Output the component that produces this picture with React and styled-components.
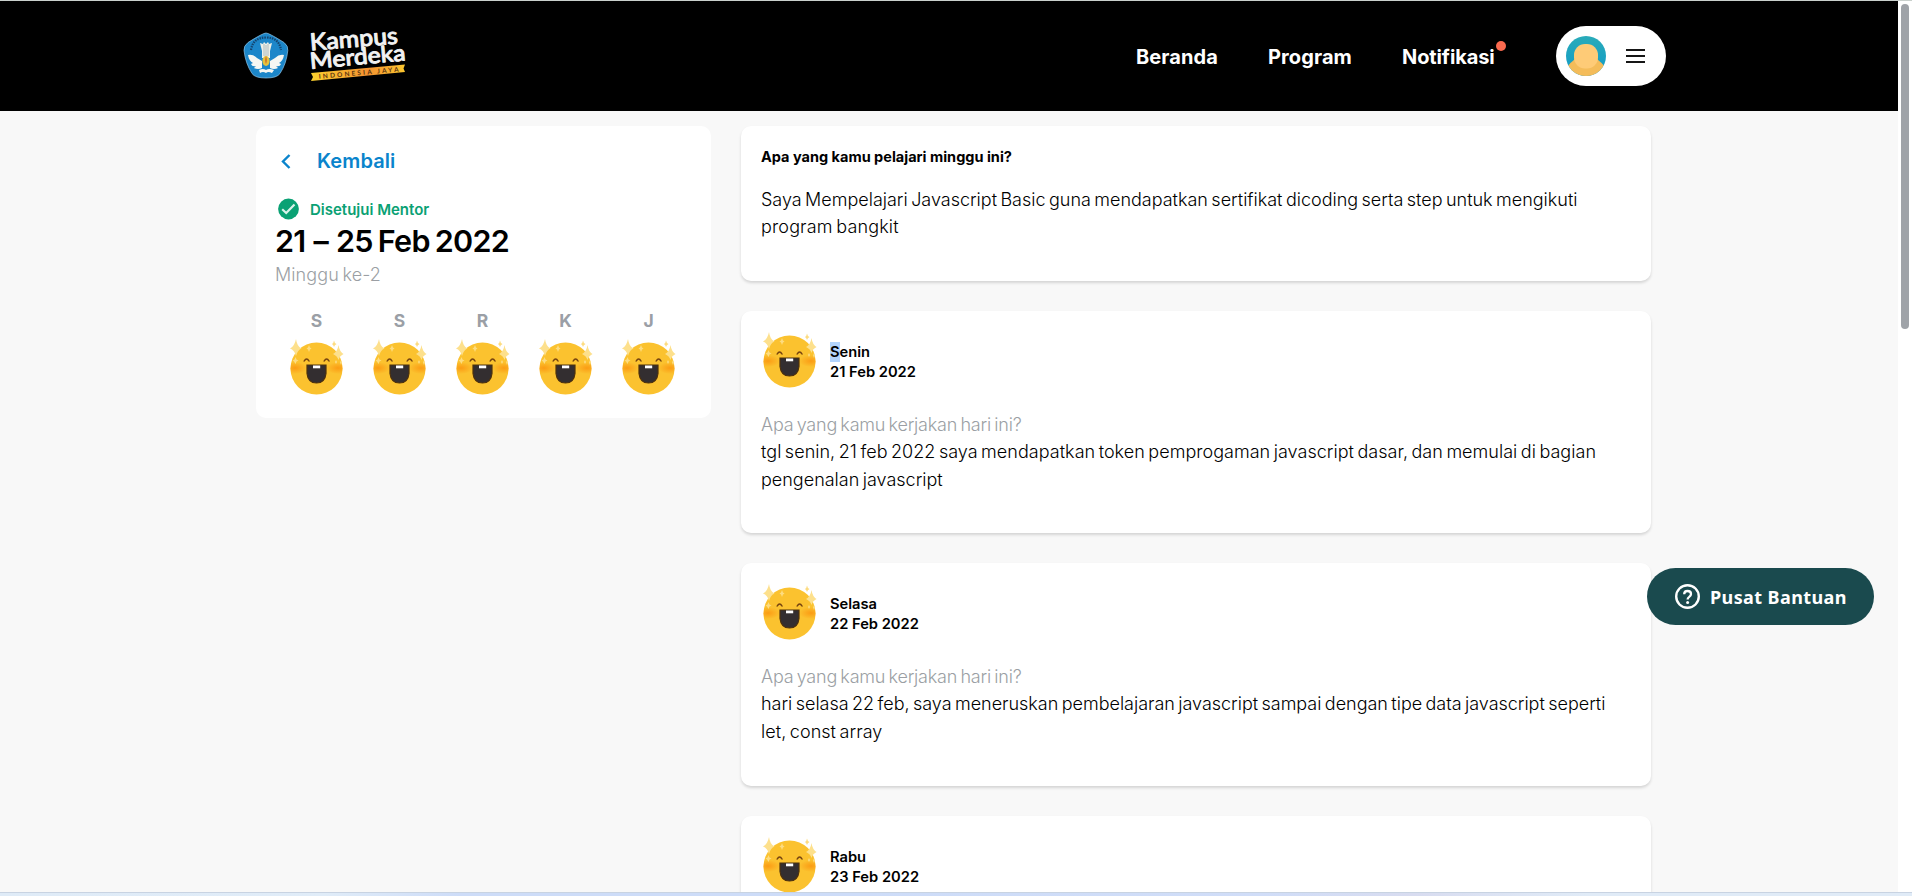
import React from "react";
import styled, { createGlobalStyle } from "styled-components";

const Global = createGlobalStyle`
  * { box-sizing: border-box; }
  html, body { margin: 0; padding: 0; overflow: hidden; }
  body {
    font-family: Inter, "Liberation Sans", sans-serif;
    color: #000;
    background: #f8f8f8;
  }
  p, h1, h2, h3 { margin: 0; font-weight: inherit; }
`;

const Window = styled.div`
  display: flex;
  flex-direction: column;
  width: 1912px;
  height: 896px;
  overflow: hidden;
  border-top: 1px solid #c9d0cc;
`;

const Viewport = styled.div`
  display: flex;
  height: 891px;
`;

const Page = styled.div`
  flex: 1;
  height: 891px;
  overflow: hidden;
  background: #f8f8f8;
`;

const ScrollTrack = styled.div`
  width: 14px;
  padding: 3px 3px 0 3px;
  background: #fff;
`;

const ScrollThumb = styled.div`
  width: 8px;
  height: 325px;
  border-radius: 4px;
  background: #9fa3a8;
`;

const Taskbar = styled.div`
  height: 4px;
  border-top: 1px solid #c8d3e2;
  background: linear-gradient(90deg, #dfebf7 0%, #e0ecf8 17%, #cddcf8 24%, #cddcf8 45%, #d0ddf8 66%, #d8dcf0 74%, #e0ebf7 83%);
`;

const Header = styled.header`
  display: flex;
  align-items: center;
  height: 110px;
  padding: 0 232px 0 243px;
  background: #000;
`;

const Brand = styled.div`
  display: flex;
  align-items: center;
  gap: 22px;
  flex: 1;
`;

const Nav = styled.nav`
  display: flex;
  align-items: center;
  gap: 50px;
  margin-right: 62px;
  padding-top: 2px;
`;

const NavLink = styled.a`
  position: relative;
  width: ${(p) => p.$width}px;
  white-space: nowrap;
  color: #fff;
  font-size: 20px;
  line-height: 26px;
  font-weight: 700;
  letter-spacing: ${(p) => p.$track || 0}px;
`;

const NewDot = styled.span`
  position: absolute;
  top: -3px;
  right: -12px;
  width: 10px;
  height: 10px;
  border-radius: 50%;
  background: #fa6a4f;
`;

const AccountPill = styled.button`
  display: flex;
  align-items: center;
  gap: 20px;
  width: 110px;
  height: 60px;
  padding: 0 10px;
  border: 0;
  border-radius: 30px;
  background: #fff;
`;

const Columns = styled.main`
  display: flex;
  align-items: flex-start;
  gap: 30px;
  padding: 15px 247px 0 256px;
`;

const Card = styled.section`
  background: #fff;
  border-radius: 10px;
`;

const SummaryCard = styled(Card)`
  width: 455px;
  height: 292px;
  padding: 19px 20px 20px 19px;
`;

const BackLink = styled.a`
  display: flex;
  align-items: center;
  height: 32px;
  gap: 26px;
  padding-left: 6px;
  color: #0a84cc;
  font-size: 20px;
  line-height: 34px;
  font-weight: 600;
  letter-spacing: 0.1px;
`;

const Status = styled.div`
  display: flex;
  align-items: center;
  height: 23px;
  margin-top: 20px;
  gap: 11px;
  padding-left: 3px;
  color: #0aa174;
  font-size: 15px;
  font-weight: 600;
`;

const StatusLabel = styled.span`
  padding-top: 2px;
`;

const WeekTitle = styled.h1`
  height: 41px;
  line-height: 42px;
  font-size: 30.5px;
  font-weight: 600;
  white-space: nowrap;
  letter-spacing: -0.7px;
  word-spacing: -2px;
`;

const Dash = styled.span`
  padding: 0 3px;
`;

const Muted = styled.p`
  color: #9b9fa4;
  font-size: 18px;
  line-height: 27.5px;
  font-weight: 300;
  letter-spacing: ${(p) => p.$track || 0}px;
  word-spacing: -1.6px;
  white-space: nowrap;
`;

const Days = styled.div`
  display: flex;
  margin-top: 20px;
`;

const Day = styled.div`
  display: flex;
  flex-direction: column;
  align-items: center;
  gap: 6px;
  width: 83px;
  color: #9b9fa6;
  font-size: 17.5px;
  line-height: 24px;
  font-weight: 700;
`;

const Feed = styled.div`
  display: flex;
  flex-direction: column;
  gap: 30px;
  width: 910px;
`;

const FeedCard = styled(Card)`
  height: ${(p) => p.$height}px;
  padding: 19px 20px 20px;
  box-shadow: 0 2px 3px rgba(0, 0, 0, 0.14);
`;

const Question = styled.h2`
  height: 21px;
  margin-bottom: 20px;
  line-height: 24px;
  font-size: 14.5px;
  font-weight: 700;
`;

const Line = styled.span`
  display: block;
  white-space: nowrap;
  letter-spacing: ${(p) => p.$track || 0}px;
`;

const Answer = styled.p`
  margin-top: -0.5px;
  font-size: 18px;
  line-height: 27.5px;
  font-weight: 300;
  word-spacing: -1.6px;
`;

const EntryHead = styled.div`
  display: flex;
  align-items: center;
  gap: 13px;
  height: 60px;
  margin-bottom: 21px;
  padding-left: 2px;
`;

const EntryDate = styled.div`
  padding-top: 4px;
  font-size: 14.7px;
  line-height: 20px;
  font-weight: 600;
`;

const Selected = styled.span`
  display: inline-block;
  height: 20px;
  background: #b3d4fc;
`;

const HelpButton = styled.button`
  position: fixed;
  left: 1647px;
  top: 568px;
  display: flex;
  align-items: center;
  gap: 10px;
  width: 227px;
  height: 57px;
  padding: 0 0 0 28px;
  border: 0;
  border-radius: 29px;
  background: #1a4a4e;
  color: #fff;
  font-family: "Noto Sans", "Open Sans", sans-serif;
  font-size: 18px;
  font-weight: 700;
  letter-spacing: 0.4px;
  white-space: nowrap;
`;

const Icon = styled.svg`
  display: block;
  flex: none;
  overflow: visible;
`;

function Emblem() {
  return (
    <Icon width="46" height="46" viewBox="0 0 46 46">
      <path d="M23 0 Q26 0 41 9.500 Q45.500 13 44.800 17.500 Q43.500 30.500 37 40.500 Q34 45 23 45 Q12 45 9 40.500 Q2.500 30.500 1 17.500 Q0.500 13 5 9.500 Q20 0 23 0Z" fill="#1c86c9" stroke="#8cc3e6" strokeWidth="0.700" />
      <path d="M8 17 Q10 4.500 23 4.500 Q36 4.500 38 17" fill="none" stroke="#14446e" strokeWidth="2.200" strokeDasharray="1.500 1" />
      <path d="M5 22 Q10 21 14 25 L19 28 L19 35 Q15 37 11 35 L13 33 Q9 34 8 31 L10 30 Q6 28 5 22Z M41 22 Q36 21 32 25 L27 28 L27 35 Q31 37 35 35 L33 33 Q37 34 38 31 L36 30 Q40 28 41 22Z" fill="#f6f7f3" />
      <path d="M17 10 L20 11 L21 9 L23 11 L25 9 L26 11 L29 10 L27 18 L27 25 L19 25 L19 18Z" fill="#eef0e8" />
      <path d="M21 11V23M23 12V23M25 11V23" stroke="#8fa4ac" strokeWidth="0.700" />
      <ellipse cx="23" cy="28" rx="3.600" ry="5" fill="#e6c13d" />
      <path d="M23 23 Q25 27 23 31 Q21 27 23 23Z" fill="#d27a2a" />
      <path d="M16 37 Q20 35 23 37 Q26 35 31 37 L29 40 Q25 38 23 40 Q20 38 17 40Z" fill="#f6f7f3" />
    </Icon>
  );
}

function KampusLogo() {
  return (
    <Icon width="96" height="54" viewBox="0 0 96 54">
      <defs>
        <linearGradient id="ribbon">
          <stop offset="0" stopColor="#fbd02e" />
          <stop offset="0.600" stopColor="#f59331" />
          <stop offset="1" stopColor="#fbc62f" />
        </linearGradient>
      </defs>
      <g fill="#f2f2f2" stroke="#f2f2f2" strokeWidth="0.900" strokeLinejoin="round" fontFamily="Lato, sans-serif" fontWeight="500">
        <text transform="translate(-0.500 21.500) rotate(-4.500)" fontSize="23.500" textLength="88" lengthAdjust="spacingAndGlyphs">Kampus</text>
        <text transform="translate(-0.500 40) rotate(-5.200)" fontSize="22.500" textLength="96" lengthAdjust="spacingAndGlyphs">Merdeka</text>
      </g>
      <path d="M0 44 L94 35.500 L92.500 39.500 L94 43 L0 52 L2 48Z" fill="url(#ribbon)" />
      <text transform="translate(8 49.800) rotate(-5.200)" fontSize="6.500" fontFamily="Lato, sans-serif" fontWeight="700" fill="#5b3510" textLength="80">INDONESIA JAYA</text>
    </Icon>
  );
}

function Avatar() {
  return (
    <Icon width="40" height="40" viewBox="0 0 40 40">
      <defs>
        <clipPath id="round"><circle cx="20" cy="20" r="20" /></clipPath>
        <linearGradient id="sea" x2="0" y2="1">
          <stop offset="0" stopColor="#29abb9" />
          <stop offset="1" stopColor="#109ac8" />
        </linearGradient>
      </defs>
      <g clipPath="url(#round)">
        <rect width="40" height="40" fill="url(#sea)" />
        <path d="M0 32 Q5 26 9 23 H31 Q35 26 40 32 V40 H0Z" fill="#f4bc5a" />
        <rect x="8" y="8" width="24" height="24.500" rx="11" fill="#fecb77" />
      </g>
    </Icon>
  );
}

function MenuIcon() {
  return (
    <Icon width="19" height="14" viewBox="0 0 19 14">
      <path d="M0 1H19M0 7H19M0 13H19" stroke="#161616" strokeWidth="2" />
    </Icon>
  );
}

function Smiley() {
  return (
    <Icon width="54" height="56" viewBox="0 0 54 56">
      <defs>
        <radialGradient id="cheek">
          <stop offset="0" stopColor="#fb9c14" />
          <stop offset="1" stopColor="#fb9c14" stopOpacity="0" />
        </radialGradient>
        <clipPath id="face"><circle cx="26.500" cy="29.500" r="26" /></clipPath>
      </defs>
      <circle cx="26.500" cy="29.500" r="26" fill="#fbc22f" />
      <g clipPath="url(#face)">
        <ellipse cx="5" cy="29" rx="12" ry="6" fill="url(#cheek)" />
        <ellipse cx="48" cy="29" rx="12" ry="6" fill="url(#cheek)" />
      </g>
      <path d="M6 0 Q7 7.500 11.500 9.500 Q7.500 11 6 17 Q4.500 11 0 9.500 Q4.500 7.500 6 0Z M48.500 6 Q49.500 12.500 53.500 15 Q49.500 17 48.500 21 Q47.500 17 43 15 Q47.500 12.500 48.500 6Z" fill="#fde08c" />
      <path d="M44 1.500 Q44.500 4.500 46.500 5 Q44.500 6 44 8 Q43.500 6 42 5 Q43.500 4.500 44 1.500Z M19 6 L20 8.500 L21.500 9.500 L20 10.500 L19 13 L18 10.500 L16.500 9.500 L18 8.500Z M5.500 18 L6.500 20.500 L8.500 21.500 L6.500 22.500 L5.500 25 L4 22.500 L2.500 21.500 L4.500 20.500Z M46 21 L47 23 L46 25 L45 23Z M51 21 L52 23.500 L51 26 L50 23.500Z" fill="#fddc80" />
      <path d="M14.200 22 Q16.600 17.800 19 22 M34.200 22 Q36.600 17.800 39 22" fill="none" stroke="#75430f" strokeWidth="1.500" strokeLinecap="round" />
      <path d="M17 26 H36 V34.500 Q35 44 26.500 44 Q18 44 17 34.500Z" fill="#332e30" stroke="#4d310d" strokeWidth="1.200" />
      <path d="M23 26.500 H30.200 V29.300 H23Z" fill="#fff" />
    </Icon>
  );
}

function CheckBadge() {
  return (
    <Icon width="21" height="22" viewBox="0 0 21 22">
      <circle cx="10.500" cy="11" r="10.400" fill="#0aa174" />
      <path d="M4.200 11.200 L8.200 15 L16.500 6.600" fill="none" stroke="#d9f2ea" strokeWidth="2.200" />
    </Icon>
  );
}

function BackIcon() {
  return (
    <Icon width="10" height="15" viewBox="0 0 10 15">
      <path d="M8.500 1 L2 7.500 L8.500 14" fill="none" stroke="#0a84cc" strokeWidth="2.400" />
    </Icon>
  );
}

function HelpIcon() {
  return (
    <Icon width="25" height="25" viewBox="0 0 25 25">
      <circle cx="12.500" cy="12.500" r="11.300" fill="none" stroke="#fff" strokeWidth="2.400" />
      <path d="M9.200 10.300 Q9.200 7 12.500 7 Q16 7 16 10 Q16 11.600 14.200 12.900 Q12.600 14 12.600 15.600" fill="none" stroke="#fff" strokeWidth="2.300" />
      <circle cx="12.600" cy="18.600" r="1.500" fill="#fff" />
    </Icon>
  );
}

const entries = [
  {
    day: <><Selected>S</Selected>enin</>,
    date: "21 Feb 2022",
    lines: [
      ["tgl senin, 21 feb 2022 saya mendapatkan token pemprogaman javascript dasar, dan memulai di bagian", 0.03],
      ["pengenalan javascript", 0],
    ],
  },
  {
    day: "Selasa",
    date: "22 Feb 2022",
    lines: [
      ["hari selasa 22 feb, saya meneruskan pembelajaran javascript sampai dengan tipe data javascript seperti", -0.02],
      ["let, const array", 0.05],
    ],
  },
  { day: "Rabu", date: "23 Feb 2022", lines: [] },
];

export default function App() {
  return (
    <Window>
      <Global />
      <Viewport>
        <Page>
          <Header>
            <Brand><Emblem /><KampusLogo /></Brand>
            <Nav>
              <NavLink $width={82} $track={0.1}>Beranda</NavLink>
              <NavLink $width={84} $track={0.1}>Program</NavLink>
              <NavLink $width={92} $track={-0.1}>Notifikasi<NewDot /></NavLink>
            </Nav>
            <AccountPill><Avatar /><MenuIcon /></AccountPill>
          </Header>
          <Columns>
            <SummaryCard>
              <BackLink><BackIcon />Kembali</BackLink>
              <Status><CheckBadge /><StatusLabel>Disetujui Mentor</StatusLabel></Status>
              <WeekTitle>21 <Dash>–</Dash> 25 Feb 2022</WeekTitle>
              <Muted $track={0.1}>Minggu ke-2</Muted>
              <Days>
                {["S", "S", "R", "K", "J"].map((d, i) => <Day key={i}>{d}<Smiley /></Day>)}
              </Days>
            </SummaryCard>
            <Feed>
              <FeedCard $height={155}>
                <Question>Apa yang kamu pelajari minggu ini?</Question>
                <Answer>
                  <Line $track={-0.01}>Saya Mempelajari Javascript Basic guna mendapatkan sertifikat dicoding serta step untuk mengikuti</Line>
                  <Line $track={0.15}>program bangkit</Line>
                </Answer>
              </FeedCard>
              {entries.map((e) => (
                <FeedCard key={e.date} $height={222.4}>
                  <EntryHead>
                    <Smiley />
                    <EntryDate><div>{e.day}</div><div>{e.date}</div></EntryDate>
                  </EntryHead>
                  {e.lines.length > 0 && <Muted $track={-0.2}>Apa yang kamu kerjakan hari ini?</Muted>}
                  <Answer>{e.lines.map(([t, k]) => <Line key={t} $track={k}>{t}</Line>)}</Answer>
                </FeedCard>
              ))}
            </Feed>
          </Columns>
        </Page>
        <ScrollTrack><ScrollThumb /></ScrollTrack>
      </Viewport>
      <Taskbar />
      <HelpButton><HelpIcon />Pusat Bantuan</HelpButton>
    </Window>
  );
}
